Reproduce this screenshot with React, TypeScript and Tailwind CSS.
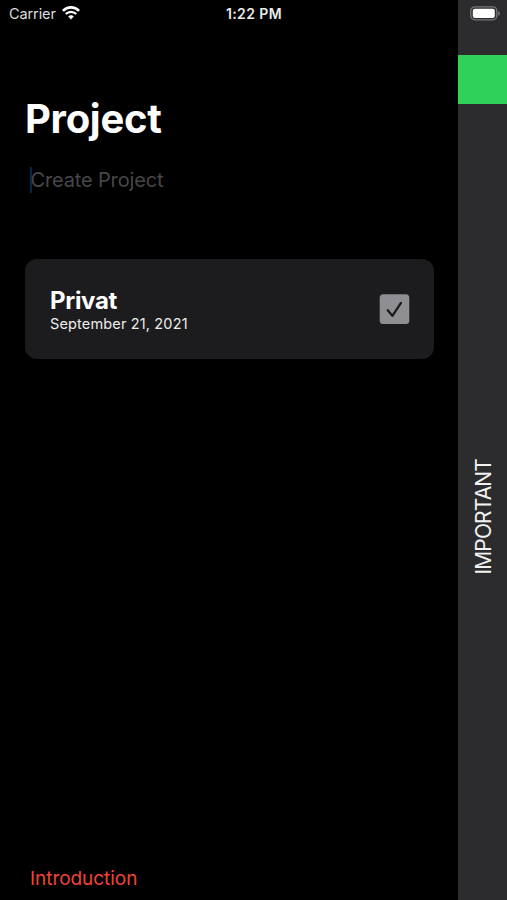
import React from "react";

const StatusBar: React.FC = () => (
  <div className="absolute inset-x-0 top-0 grid h-7 grid-cols-3 items-center pl-[9px] pr-[7px] leading-none">
    <div className="flex items-center gap-[6.5px] text-[14.5px] tracking-[-0.1px] text-[#dcdcdc]">
      <span>Carrier</span>
      <svg className="mb-[2px]" width="18" height="14" viewBox="0 0 18 14" fill="none" stroke="#ffffff">
        <path d="M0.9 4.9C5.4 0.2 12.6 0.2 17.1 4.9" strokeWidth="2.6" />
        <path d="M3.8 8C6.8 5.1 11.2 5.1 14.2 8" strokeWidth="2.4" />
        <path d="M6.2 10.4C7.8 8.9 10.2 8.9 11.8 10.4L9 13.5Z" fill="#ffffff" stroke="none" />
      </svg>
    </div>
    <span className="pr-px text-center text-[14px] font-semibold tracking-[0.4px] text-[#ebebeb]">1:22 PM</span>
    <svg className="mb-[2px] justify-self-end" width="30" height="15" viewBox="0 0 30 15">
      <rect x="0.8" y="0.8" width="26" height="13" rx="4" fill="none" stroke="#77777a" strokeWidth="1.3" />
      <rect x="2.8" y="2.7" width="22" height="9.3" rx="2" fill="#ffffff" />
      <path d="M28.2 5C30.4 6 30.4 8.8 28.2 9.8Z" fill="#77777a" />
    </svg>
  </div>
);

const ProjectCard: React.FC<{ title: string; date: string }> = ({ title, date }) => (
  <div className="mt-[63px] flex h-[100px] items-center justify-between rounded-xl bg-[#1c1c1e] pl-[25px] pr-6">
    <div className="flex flex-col pt-[3px] text-white">
      <span className="text-2xl font-bold leading-[26px] tracking-[-0.3px]">{title}</span>
      <span className="text-[14.5px] leading-5 tracking-[0.15px] text-[#ececec]">{date}</span>
    </div>
    <svg width="31" height="30" viewBox="0 0 31 30" fill="none">
      <rect x="0.7" y="0.2" width="29.6" height="29.8" rx="3.5" fill="#8e8e93" />
      <path d="M8.7 16.3L13.4 21.8L22 8.9" stroke="#1c1c1e" strokeWidth="2.3" strokeLinecap="round" strokeLinejoin="round" />
    </svg>
  </div>
);

const SideRail: React.FC = () => (
  <aside className="flex w-[49px] shrink-0 flex-col bg-[#2c2c2e] pt-[55px]">
    <div className="h-[49px] bg-[#30d158]" />
    <div className="flex flex-1 items-center justify-center pl-[2px] pt-[30px]">
      <span className="rotate-180 text-[21px] leading-none tracking-[-0.85px] text-[#f2f2f2] [writing-mode:vertical-rl]">IMPORTANT</span>
    </div>
  </aside>
);

export default function App() {
  return (
    <div className="relative flex h-[900px] w-[507px] overflow-hidden bg-black font-['Inter',sans-serif]">
      <main className="flex flex-1 flex-col pl-[25px] pr-6">
        <h1 className="mt-[95px] text-[40px] font-bold leading-[48px] tracking-[-0.3px] text-white">Project</h1>
        <div className="mb-px mt-[21px] flex h-[31px] items-center pl-[5px]">
          <span className="h-[26px] w-[2px] bg-[#06274a]" />
          <span className="-ml-[1.5px] text-[20px] leading-6 tracking-[-0.15px] text-[#474749]">Create Project</span>
        </div>
        <ProjectCard title="Privat" date="September 21, 2021" />
        <button className="mb-[9px] mt-auto self-start pl-[5px] text-[19px] leading-6 tracking-[-0.05px] text-[#f0433b]">Introduction</button>
      </main>
      <SideRail />
      <StatusBar />
    </div>
  );
}
